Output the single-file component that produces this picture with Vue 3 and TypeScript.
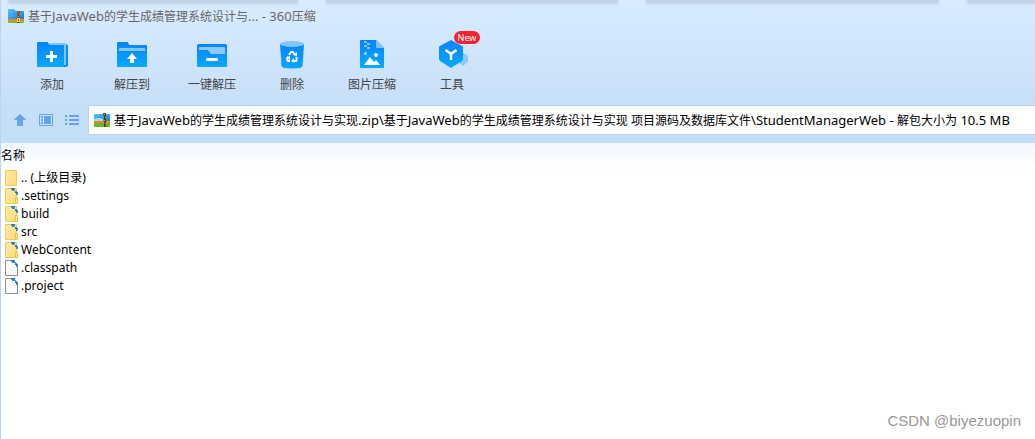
<script setup lang="ts">
import { nextTick, ref } from 'vue'

interface Tool {
  id: string
  label: string
  badge?: string
}

interface Entry {
  name: string
  kind: 'up' | 'folder' | 'file'
}

interface Run {
  text: string
  latin: boolean
}

const tools: Tool[] = [
  { id: 'add', label: '添加' },
  { id: 'extract', label: '解压到' },
  { id: 'quick', label: '一键解压' },
  { id: 'delete', label: '删除' },
  { id: 'image', label: '图片压缩' },
  { id: 'tools', label: '工具', badge: 'New' },
]

const entries: Entry[] = [
  { name: '.. (上级目录)', kind: 'up' },
  { name: '.settings', kind: 'folder' },
  { name: 'build', kind: 'folder' },
  { name: 'src', kind: 'folder' },
  { name: 'WebContent', kind: 'folder' },
  { name: '.classpath', kind: 'file' },
  { name: '.project', kind: 'file' },
]

const title = '基于JavaWeb的学生成绩管理系统设计与... - 360压缩'
const path = ref(
  '基于JavaWeb的学生成绩管理系统设计与实现.zip\\基于JavaWeb的学生成绩管理系统设计与实现 项目源码及数据库文件\\StudentManagerWeb - 解包大小为 10.5 MB',
)

const editing = ref(false)
const field = ref<HTMLInputElement | null>(null)

// Latin runs are set one pixel larger than the Chinese around them.
function runs(text: string): Run[] {
  return (text.match(/[\x20-\x7e]+|[^\x20-\x7e]+/g) ?? []).map((part) => ({
    text: part,
    latin: /^[\x20-\x7e]/.test(part),
  }))
}

async function edit() {
  editing.value = true
  await nextTick()
  field.value?.focus()
}
</script>

<template>
  <div class="window">
    <svg class="defs" width="0" height="0" aria-hidden="true">
      <defs>
        <linearGradient id="blue" x1="0" y1="0" x2="0" y2="1">
          <stop offset="0" stop-color="#0784fd" />
          <stop offset="1" stop-color="#05a9fe" />
        </linearGradient>
        <linearGradient id="sky" x1="0" y1="0" x2="1" y2="1">
          <stop offset="0" stop-color="#56c4f5" />
          <stop offset="1" stop-color="#147fd8" />
        </linearGradient>
        <linearGradient id="paper" x1="0" y1="0" x2="1" y2="1">
          <stop offset="0" stop-color="#ffeaa8" />
          <stop offset="1" stop-color="#ffdc78" />
        </linearGradient>
      </defs>
    </svg>

    <div class="shades" aria-hidden="true"><i></i><i></i><i></i><i></i></div>

    <header class="titlebar">
      <svg width="16" height="16" viewBox="0 0 16 16" aria-hidden="true">
        <path d="M0 2q0-1 1-1h5l2 2h7q1 0 1 1v7H0z" fill="url(#sky)" />
        <path d="M0 11h16v2H0z" fill="#f58220" />
        <path d="M0 13h16v1q0 1-1 1H1q-1 0-1-1z" fill="#7bbf28" />
        <path d="M9 3h3v12H9z" fill="#8a4a22" />
        <path d="M10 4h1v1h-1zm1 2h1v1h-1zm-1 2h1v1h-1z" fill="#c89663" />
        <path d="M9 10h3v4H9z" fill="#fbd24b" />
        <path d="M10 11h1v2h-1z" fill="#8a4a10" />
      </svg>
      <h1><span v-for="(run, i) in runs(title)" :key="i" :class="{ latin: run.latin }">{{ run.text }}</span></h1>
    </header>

    <nav class="toolbar">
      <button v-for="tool in tools" :key="tool.id" class="tool" type="button">
        <span class="glyph">
          <svg width="32" height="32" viewBox="0 0 32 32" aria-hidden="true">
            <template v-if="tool.id === 'add'">
              <path d="M17 6h13q2 1 2 2v19q0 2-2 2H17z" fill="#078ffb" />
              <path d="M13 5h16q1 0 1 1v21H13z" fill="#80c5fd" />
              <path d="M1 5q0-1 1-1h9.500l2 3H27q1 0 1 1v21H2q-1 0-1-1z" fill="url(#blue)" />
              <path d="M14 13h3v4h4v3h-4v4h-3v-4h-4v-3h4z" fill="#fff" />
            </template>
            <template v-else-if="tool.id === 'extract'">
              <path d="M1 5q0-1 1-1h9.500l2 3H30q1 0 1 1v20q0 1-1 1H2q-1 0-1-1z" fill="url(#blue)" />
              <path d="M3 11q0-1 1-1h24q1 0 1 1v2H3z" fill="#80c5fd" />
              <path d="M16 15l5 6h-3v4h-4v-4h-3z" fill="#fff" />
            </template>
            <template v-else-if="tool.id === 'quick'">
              <rect x="1" y="6" width="30" height="23" rx="1.500" fill="url(#blue)" />
              <path d="M3 10q0-1 1-1h24q1 0 1 1v6H15l-3-4H3z" fill="#8bcafd" />
              <rect x="10" y="20" width="12" height="3" rx="1" fill="#fff" />
            </template>
            <template v-else-if="tool.id === 'delete'">
              <path d="M4 6h24l-1.500 22q0 2.500-10.500 2.500T5.500 28z" fill="url(#blue)" />
              <ellipse cx="16" cy="6" rx="12" ry="3" fill="#80c5fd" />
              <g fill="none" stroke="#fff" stroke-width="2">
                <path d="M13 17l2-3h2l2 3" />
                <path d="M20 19l1 2-1 2h-3" />
                <path d="M14 23h-2l-1-2 1-2" />
              </g>
              <path d="M17 17l4 1v-4zM18 20v5l-3-2zM10 19l4-1v4z" fill="#fff" />
            </template>
            <template v-else-if="tool.id === 'image'">
              <path d="M4 3q0-1 1-1h15l8 8v19q0 1-1 1H5q-1 0-1-1z" fill="url(#blue)" />
              <path d="M20 2l8 8h-7q-1 0-1-1z" fill="#80c5fd" />
              <path d="M8 3h3v2H8zm3 2h3v2h-3zM8 7h3v2H8zm3 2h3v2h-3zm-3 5h3v3H8z" fill="#80c5fd" />
              <circle cx="20" cy="17" r="2" fill="#fff" />
              <path d="M8 27l6-8 4 5 2-2 4 5z" fill="#fff" />
            </template>
            <template v-else>
              <path d="M27 15l5 3v6l-5 4-5-4v-6z" fill="#8bc9fc" />
              <path d="M15 2l11 6q1 1 1 1v12l-1 2-11 7-11-7-1-2V9l1-1z" fill="url(#blue)" />
              <path d="M9.500 12l5.500 4 5.500-4M15 16v6" fill="none" stroke="#fff" stroke-width="2.500" />
            </template>
          </svg>
          <span v-if="tool.badge" class="badge">{{ tool.badge }}</span>
        </span>
        <span class="label">{{ tool.label }}</span>
      </button>
    </nav>

    <div class="pathbar">
      <div class="controls">
        <button type="button" aria-label="上级目录">
          <svg width="16" height="16" viewBox="0 0 16 16" aria-hidden="true">
            <path d="M8 2l6.500 6H11v6H5V8H1.500z" fill="#65a4eb" />
          </svg>
        </button>
        <button type="button" aria-label="预览">
          <svg width="16" height="16" viewBox="0 0 16 16" aria-hidden="true">
            <path d="M1.500 2.500h13v11h-13z" fill="none" stroke="#65a4eb" />
            <path d="M3 4h2v2H3zm0 3h2v2H3zm0 3h2v2H3zM6 4h7v8H6z" fill="#65a4eb" />
          </svg>
        </button>
        <button type="button" aria-label="列表">
          <svg width="16" height="16" viewBox="0 0 16 16" aria-hidden="true">
            <path d="M1 3h2v2H1zm0 4h2v2H1zm0 4h2v2H1zM5 3h10v2H5zm0 4h10v2H5zm0 4h10v2H5z" fill="#65a4eb" />
          </svg>
        </button>
      </div>
      <div class="address">
        <svg width="16" height="16" viewBox="0 0 16 16" aria-hidden="true">
          <path d="M0 3q0-1 1-1h14q1 0 1 1v6H0z" fill="url(#sky)" />
          <path d="M0 7q5-2 9 0v2H0z" fill="#9dddf5" />
          <path d="M0 9h16v3H0z" fill="#f58220" />
          <path d="M0 11h16v3q0 1-1 1H1q-1 0-1-1z" fill="#68b824" />
          <path d="M9 1h3v14h-2V5z" fill="#663719" />
          <path d="M10 2h1v1h-1zm1 3h1v1h-1zm-1 3h1v1h-1zm1 3h1v1h-1z" fill="#d39a5b" />
        </svg>
        <input
          v-if="editing"
          ref="field"
          v-model="path"
          type="text"
          aria-label="路径"
          @blur="editing = false"
        />
        <button v-else class="path" type="button" @click="edit"><span v-for="(run, i) in runs(path)" :key="i" :class="{ latin: run.latin }">{{ run.text }}</span></button>
      </div>
    </div>

    <main class="listing">
      <table>
        <thead>
          <tr><th scope="col">名称</th></tr>
        </thead>
        <tbody>
          <tr v-for="entry in entries" :key="entry.name">
            <td>
              <div class="entry">
                <svg width="16" height="18" viewBox="0 0 16 18" aria-hidden="true">
                  <path
                    v-if="entry.kind === 'file'"
                    d="M1.500 1.500h8l4 4v11h-12z"
                    fill="#fafafa"
                    stroke="#8e8e8e"
                  />
                  <path v-else d="M1.500 1.500h11v15h-11z" fill="url(#paper)" stroke="#eccb58" />
                  <path
                    v-if="entry.kind === 'folder'"
                    d="M11.500 10.500h2v6h-2z"
                    fill="#ffe69b"
                    stroke="#e9c34c"
                  />
                  <template v-if="entry.kind !== 'up'">
                    <path d="M7 1h4v3h2v1h1v3h-2V6h-1V4H8V3H7z" fill="#3a91d5" />
                    <path d="M8 1h2v1H8zm3 4h2v1h-2z" fill="#1769a8" />
                  </template>
                </svg>
                <span>{{ entry.name }}</span>
              </div>
            </td>
          </tr>
        </tbody>
      </table>
      <p class="credit">CSDN @biyezuopin</p>
    </main>
  </div>
</template>

<style>
body {
  margin: 0;
  background: #fff;
}
</style>

<style scoped>
.window {
  position: relative;
  display: flex;
  flex-direction: column;
  min-height: 100vh;
  box-sizing: border-box;
  overflow: hidden;
  border-left: 1px solid #b9d5f6;
  background: linear-gradient(#d8ebff 0, #d2e7fd 40px, #c7dff8 100px, #c2dff8 142px);
  color: #000;
  font: 12px/18px "Noto Sans", "Noto Sans CJK SC", sans-serif;
}

.defs {
  position: absolute;
}

.shades {
  position: absolute;
  inset: 0 0 auto 0;
  display: grid;
  grid-template-columns: 288fr 289fr 291fr 67fr;
  column-gap: 28px;
  height: 5px;
  padding-left: 7px;
}

.shades i {
  background: linear-gradient(#adc1d3, #d5e8fb);
  filter: blur(1px);
}

.titlebar {
  display: flex;
  align-items: center;
  gap: 4px;
  height: 32px;
  padding-left: 7px;
}

h1 {
  margin: 0;
  color: #666;
  font-size: 12px;
  font-weight: 400;
}

.latin {
  font-size: 13px;
}

button {
  padding: 0;
  border: 0;
  background: none;
  color: inherit;
  font: inherit;
}

.toolbar {
  display: flex;
  height: 74px;
  padding: 6px 0 0 11px;
  box-sizing: border-box;
}

.tool {
  display: flex;
  flex-direction: column;
  align-items: center;
  gap: 6px;
  width: 80px;
  color: #444;
}

.glyph {
  position: relative;
  height: 32px;
}

.glyph svg,
.controls svg {
  display: block;
}

.badge {
  position: absolute;
  top: -7px;
  left: 18px;
  width: 26px;
  height: 13px;
  border-radius: 7px;
  background: #f5222d;
  color: #fff;
  font-size: 9px;
  line-height: 13px;
  text-align: center;
}

.label {
  white-space: nowrap;
}

.pathbar {
  display: flex;
  align-items: flex-start;
  height: 37px;
}

.controls {
  display: flex;
  flex: none;
  align-items: center;
  gap: 10px;
  height: 28px;
  padding: 0 3px 0 11px;
  margin-right: 6px;
}

.address {
  display: flex;
  flex: 1;
  align-items: center;
  gap: 4px;
  min-width: 0;
  height: 28px;
  padding-left: 5px;
  background: #fff;
  box-shadow: 0 0 0 1px #b8d5f2;
}

.address svg {
  flex: none;
}

input,
.path {
  flex: 1;
  min-width: 0;
  padding: 0;
  border: 0;
  outline: 0;
  background: none;
  color: #000;
  font: inherit;
  text-align: left;
}

.path {
  overflow: hidden;
  line-height: 20px;
  white-space: nowrap;
  cursor: text;
}

.listing {
  display: flex;
  flex: 1;
  flex-direction: column;
  justify-content: space-between;
  background: linear-gradient(#f1f7fe, #fff 26px);
}

table {
  width: 100%;
  border-collapse: collapse;
}

th {
  height: 26px;
  padding: 0;
  font-weight: 400;
  line-height: 16px;
  text-align: left;
}

td {
  height: 18px;
  padding: 0;
}

.entry {
  display: flex;
  align-items: center;
  height: 18px;
  gap: 1px;
  padding-left: 3px;
}

.credit {
  margin: 0 14px 8px;
  color: #999;
  font: 15px/20px "Liberation Sans", sans-serif;
  text-align: right;
}
</style>
